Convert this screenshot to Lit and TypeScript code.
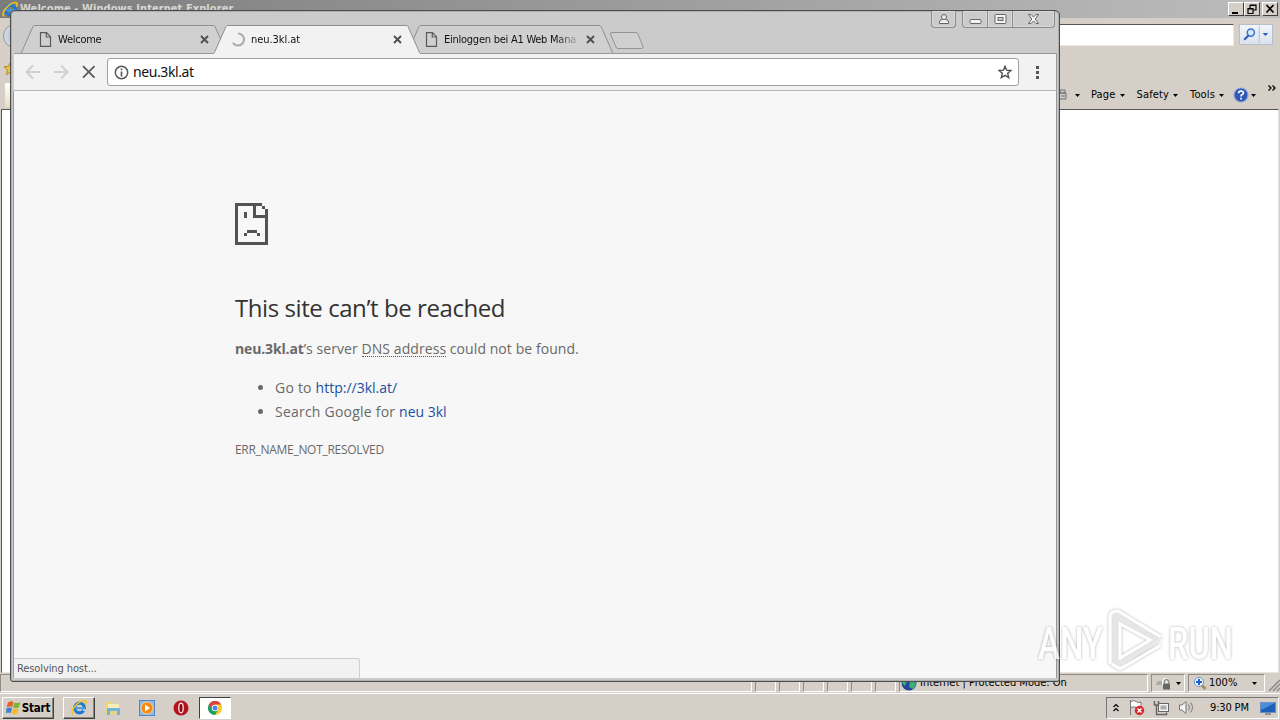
import {LitElement, css, html, svg} from 'lit';
import {customElement, property} from 'lit/decorators.js';
import {classMap} from 'lit/directives/class-map.js';

interface Tab {
  title: string;
  active: boolean;
  loading: boolean;
}

const ieLogo = svg`
  <circle cx="8.5" cy="9" r="4.8" fill="none" stroke="#1f78d0" stroke-width="3.2" />
  <path d="M4 9.200h10" stroke="#3f9be6" stroke-width="2" />
  <path d="M12 10.300l4 .2v1.500h-4z" fill="#d5d0c8" />
  <path d="M2 15.500C-1.500 12 6 2.500 13.500 1.500c2.200 0 1.800 2.500.8 4" fill="none" stroke="#f2c21c" stroke-width="1.700" />
`;

const pageIcon = svg`
  <path d="M1.500.7h6l4 4v9.600h-10zM7.300.9v4.100h4" fill="none" stroke="#5a5a5a" stroke-width="1.200" />
`;

@customElement('chrome-tab')
export class ChromeTab extends LitElement {
  static styles = css`
    :host {
      display: block;
      position: relative;
      width: 206px;
      height: 30px;
      flex: none;
      margin-right: -13px;
    }
    .shape {
      position: absolute;
      inset: 0;
    }
    .content {
      position: relative;
      display: flex;
      align-items: center;
      height: 30px;
      padding: 1px 18px 0;
      box-sizing: border-box;
      width: 206px;
    }
    .icon {
      flex: none;
      width: 13px;
      margin-right: 6px;
    }
    .title {
      width: 134px;
      overflow: hidden;
      white-space: nowrap;
      font-size: 11px;
      line-height: 16px;
      letter-spacing: -0.25px;
      color: #111;
      -webkit-mask-image: linear-gradient(90deg, #000 112px, transparent 138px);
    }
    .title.loading {
      letter-spacing: -0.05px;
    }
    .close {
      margin-left: 8px;
      flex: none;
    }
  `;

  @property({type: Object})
  tab: Tab = {title: '', active: false, loading: false};

  render() {
    const {title, active, loading} = this.tab;
    return html`
      <svg class="shape" width="206" height="30" viewBox="0 0 206 30">
        <path d="M0 29.500L12 2.500Q12.500 1.500 14 1.500H192Q193.500 1.500 194 2.500L206 29.500" fill="${active ? '#f2f2f2' : '#d0d0d0'}" stroke="#8e8e8e" />
        ${active ? svg`<path d="M0 29.500H206" stroke="#f2f2f2" />` : svg`<path d="M0 29.500H206" stroke="#989898" />`}
      </svg>
      <div class="content">
        <svg class="icon" width="13" height="15" viewBox="0 0 13 15">
          ${loading
            ? svg`<path d="M6 1.500a6 6 0 0 1 0 12a6 6 0 0 1-5-2.800" fill="none" stroke="#aaa" stroke-width="2" />`
            : pageIcon}
        </svg>
        <span class=${classMap({title: true, loading})}>${title}</span>
        <svg class="close" width="9" height="9" viewBox="0 0 9 9">
          <path d="M1 1l7 7M8 1l-7 7" stroke="#505050" stroke-width="1.900" />
        </svg>
      </div>
    `;
  }
}

@customElement('chrome-window')
export class ChromeWindow extends LitElement {
  static styles = css`
    :host {
      display: flex;
      flex-direction: column;
      box-sizing: border-box;
      border: 1px solid #4c4c4c;
      border-radius: 5px 5px 3px 3px;
      background: #cbcbcb;
      padding: 0 2px 3px 3px;
      overflow: hidden;
      font-family: Tahoma, 'DejaVu Sans Condensed', 'DejaVu Sans', sans-serif;
      box-shadow: inset 0 0 0 1px #b0b0b0;
    }
    .frame {
      display: flex;
      justify-content: flex-end;
      height: 13px;
      padding-right: 2px;
    }
    .control {
      display: flex;
      align-items: center;
      justify-content: center;
      height: 17px;
      box-sizing: border-box;
      border: 1px solid #8a8a8a;
      border-top: 0;
      border-left-width: 0;
      flex: none;
      box-shadow: inset 0 0 0 1px #d9d9d9;
    }
    .control.user {
      width: 25px;
      border-left-width: 1px;
      border-radius: 0 0 4px 4px;
      margin-right: 6px;
    }
    .control.min {
      width: 26px;
      border-left-width: 1px;
      border-radius: 0 0 0 4px;
    }
    .control.max {
      width: 25px;
    }
    .control.close {
      width: 42px;
      border-radius: 0 0 4px 0;
    }
    .tabs {
      display: flex;
      height: 30px;
      padding-left: 7px;
    }
    chrome-tab.active {
      z-index: 1;
    }
    .new-tab {
      margin: 8px 0 0 9px;
    }
    .toolbar {
      display: flex;
      align-items: center;
      height: 38px;
      box-sizing: border-box;
      background: #f2f2f2;
      border-top: 1px solid #989898;
      border-bottom: 1px solid #b6b6b6;
      margin-top: -1px;
      padding: 0 12px 0 11px;
      border-right: 1px solid #999;
    }
    .nav {
      width: 28px;
      flex: none;
    }
    .nav.stop {
      width: 26px;
    }
    .omnibox {
      display: flex;
      align-items: center;
      flex: none;
      width: 912px;
      height: 28px;
      box-sizing: border-box;
      border: 1px solid #a0a0a0;
      border-radius: 3px;
      background: #fff;
      padding: 0 6px;
    }
    .url {
      flex: 1;
      font: 14px/20px 'Noto Sans', 'Open Sans', sans-serif;
      letter-spacing: -0.4px;
      margin-left: 4px;
      color: #111;
    }
    .menu {
      flex: none;
      margin-left: 16px;
    }
    .page {
      flex: 1;
      display: flex;
      flex-direction: column;
      align-items: flex-start;
      justify-content: space-between;
      background: #f7f7f7;
      border: solid #999;
      border-width: 0 1px;
      margin-left: -1px;
    }
    .error {
      padding: 112px 0 0 221px;
      font: 15px/24px 'Open Sans', 'Noto Sans', sans-serif;
      color: #696969;
      white-space: nowrap;
    }
    .sad {
      display: block;
    }
    h1 {
      margin: 47px 0 0;
      font-size: 24px;
      font-weight: 400;
      line-height: 32px;
      color: #333;
      letter-spacing: -0.43px;
    }
    p {
      margin: 13px 0 0;
      font-size: 14px;
      letter-spacing: 0.07px;
    }
    b {
      letter-spacing: -0.15px;
    }
    .dns {
      border-bottom: 1px dotted #555;
      display: inline-block;
      line-height: 15px;
    }
    ul {
      margin: 15px 0 0;
      padding-left: 40px;
      font-size: 14px;
      letter-spacing: 0.22px;
    }
    a {
      color: #1a4fa3;
      letter-spacing: 0;
    }
    .code {
      margin-top: 14px;
      font-size: 12px;
      letter-spacing: -0.3px;
    }
    .status {
      width: 346px;
      height: 20px;
      box-sizing: border-box;
      border: 1px solid #cfcfcf;
      border-width: 1px 1px 0 0;
      border-radius: 0 3px 0 0;
      background: #f2f2f2;
      padding-left: 3px;
      font-size: 11px;
      letter-spacing: -0.1px;
      line-height: 19px;
      color: #555;
    }
  `;

  tabs: Array<Tab> = [
    {title: 'Welcome', active: false, loading: false},
    {title: 'neu.3kl.at', active: true, loading: true},
    {title: 'Einloggen bei A1 Web Mana', active: false, loading: false}
  ];

  render() {
    return html`
      <div class="frame">
        <div class="control user">
          <svg width="12" height="12" viewBox="0 0 12 12" fill="#eee" stroke="#666"><path d="M1.500 10.500V9Q1.500 6.500 4.500 6.500H7.500Q10.500 6.500 10.500 9V10.500z" /><circle cx="6" cy="4" r="2.500" /></svg>
        </div>
        <div class="control min">
          <svg width="13" height="12" viewBox="0 0 13 12"><rect x="1" y="6.500" width="11" height="4" rx="1" fill="#f4f4f4" stroke="#666" /></svg>
        </div>
        <div class="control max">
          <svg width="13" height="12" viewBox="0 0 13 12" fill="#f4f4f4" stroke="#666"><rect x="1" y="1.500" width="11" height="9" rx="1" /><rect x="4" y="4.500" width="5" height="3" fill="#ccc" /></svg>
        </div>
        <div class="control close">
          <svg width="13" height="12" viewBox="0 0 13 12"><path d="M1.500 1.500H4L6.500 4L9 1.500H11.500L8.200 6L11.500 10.500H9L6.500 8L4 10.500H1.500L4.800 6z" fill="#f4f4f4" stroke="#666" /></svg>
        </div>
      </div>
      <div class="tabs">
        ${this.tabs.map(tab => html`<chrome-tab class=${classMap({active: tab.active})} .tab=${tab}></chrome-tab>`)}
        <svg class="new-tab" width="36" height="18" viewBox="0 0 36 18">
          <path d="M4 .5H27Q28.500.5 29 2L34 14.500Q34.500 16.500 32.500 16.500H9Q7.500 16.500 7 15L1.500 2Q1 .5 3 .5z" fill="#d0d0d0" stroke="#939393" />
        </svg>
      </div>
      <div class="toolbar">
        <svg class="nav" width="28" height="16" viewBox="0 0 28 16"><path d="M15 8H1.500M8 1.500L1.500 8L8 14.500" fill="none" stroke="#d0d0d0" stroke-width="2" /></svg>
        <svg class="nav" width="28" height="16" viewBox="0 0 28 16"><path d="M1 8H14.500M8 1.500L14.500 8L8 14.500" fill="none" stroke="#d0d0d0" stroke-width="2" /></svg>
        <svg class="nav stop" width="26" height="16" viewBox="0 0 26 16"><path d="M2 2.200L13.500 13.700M13.500 2.200L2 13.700" stroke="#5a5a5a" stroke-width="1.800" /></svg>
        <div class="omnibox">
          <svg width="15" height="15" viewBox="0 0 15 15"><circle cx="7.500" cy="7.500" r="6.200" fill="none" stroke="#5a5a5a" stroke-width="1.500" /><path d="M7.500 3.500v1.700M7.500 6.500v5" stroke="#5a5a5a" stroke-width="1.700" /></svg>
          <span class="url">neu.3kl.at</span>
          <svg width="14" height="14" viewBox="0 0 14 14"><path d="M7 1.300L8.600 5.200L13 5.500L9.700 8.300L10.700 12.600L7 10.300L3.300 12.600L4.300 8.300L1 5.500L5.400 5.200z" fill="none" stroke="#505050" stroke-width="1.400" /></svg>
        </div>
        <svg class="menu" width="5" height="14" viewBox="0 0 5 14" fill="#555"><rect x="1" y="1" width="3" height="3" /><rect x="1" y="6" width="3" height="3" /><rect x="1" y="11" width="3" height="3" /></svg>
      </div>
      <div class="page">
        <div class="error">
          <svg class="sad" width="33" height="42" viewBox="0 0 33 42" fill="#535353" shape-rendering="crispEdges">
            <path d="M0 0H27V3H21V12H30V6H33V42H0zM3 3V39H30V15H18V3z" fill-rule="evenodd" />
            <rect x="27" y="3" width="3" height="3" />
            <rect x="9" y="9" width="3" height="6" />
            <rect x="12" y="27" width="10" height="3" />
            <rect x="9" y="30" width="3" height="3" />
            <rect x="22" y="30" width="3" height="3" />
          </svg>
          <h1>This site can’t be reached</h1>
          <p><b>neu.3kl.at</b>’s server <span class="dns">DNS address</span> could not be found.</p>
          <ul>
            <li>Go to <a>http://3kl.at/</a></li>
            <li>Search Google for <a>neu 3kl</a></li>
          </ul>
          <div class="code">ERR_NAME_NOT_RESOLVED</div>
        </div>
        <div class="status">Resolving host...</div>
      </div>
    `;
  }
}

@customElement('ie-window')
export class IeWindow extends LitElement {
  static styles = css`
    :host {
      display: flex;
      flex-direction: column;
      background: #d5cfc7;
      color: #000;
      font: 11px/14px Tahoma, 'DejaVu Sans Condensed', 'DejaVu Sans', sans-serif;
    }
    .title {
      display: flex;
      align-items: center;
      height: 18px;
      flex: none;
      background: linear-gradient(90deg, #7c7c7c, #bcbcbc);
      padding: 0 2px;
      color: #d9d5cf;
      font: bold 11px/20px 'DejaVu Sans Condensed', 'DejaVu Sans', sans-serif;
      letter-spacing: 0.07px;
    }
    .title span {
      flex: 1;
      margin-left: 1px;
    }
    .box {
      width: 16px;
      height: 14px;
      box-sizing: border-box;
      background: #d5cfc7;
      border: 1px solid;
      border-color: #fff #404040 #404040 #fff;
      display: block;
    }
    .box.last {
      margin-left: 2px;
    }
    .address {
      display: flex;
      height: 36px;
      padding: 6px 7px 0 0;
      box-sizing: border-box;
      flex: none;
    }
    .back {
      width: 24px;
      height: 24px;
      border-radius: 50%;
      margin: 0 0 0 3px;
      border: 1px solid #8a96a6;
      background: radial-gradient(#a8b4c4, #e9edf2);
      box-sizing: border-box;
      flex: none;
    }
    .field {
      flex: 1;
      height: 22px;
      box-sizing: border-box;
      background: #fff;
      border: 1px solid #ece9e2;
      border-top-color: #555;
      margin-right: 5px;
    }
    .search {
      display: flex;
      width: 34px;
      height: 21px;
      box-sizing: border-box;
      border: 1px solid #b4bfce;
      background: linear-gradient(#f2f5f9, #dbe2ec);
    }
    .favorites {
      height: 27px;
      padding: 8px 0 0 4px;
      box-sizing: border-box;
      flex: none;
    }
    .commands {
      display: flex;
      justify-content: flex-end;
      align-items: center;
      flex: none;
      height: 28px;
      padding: 0 4px 0 5px;
    }
    .left-tab {
      width: 10px;
      height: 24px;
      background: linear-gradient(#fff, #e5dfc0);
      margin-right: auto;
    }
    .item {
      display: flex;
      align-items: center;
      gap: 4px;
      margin-right: 12px;
      letter-spacing: 0.15px;
    }
    .item.printer {
      margin-right: 11px;
      gap: 8px;
    }
    .item.help {
      margin: 0 12px 0 -3px;
      gap: 2px;
    }
    .more {
      align-self: flex-start;
    }
    .view {
      flex: 1;
      background: #fff;
      border: 1px solid #555;
      border-right-color: #e8e4de;
      border-bottom-color: #e8e4de;
      margin: 0 1px 0 1px;
    }
    .status {
      display: flex;
      height: 20px;
      flex: none;
      padding-top: 1px;
      box-sizing: border-box;
      gap: 3px;
    }
    .cell {
      width: 19px;
      border: 1px solid;
      border-color: #908c86 #fff #fff #908c86;
      display: flex;
      align-items: center;
      height: 16px;
      box-sizing: content-box;
      flex: none;
    }
    .cell.text {
      flex: 1;
    }
    .cell.zone {
      width: 246px;
      padding-left: 1px;
    }
    .cell.zone span {
      margin-left: 3px;
    }
    .cell.lock {
      width: 29px;
      gap: 4px;
      padding-left: 3px;
    }
    .cell.zoom {
      width: 64px;
      padding: 0 7px 0 4px;
    }
    .zoom span {
      flex: 1;
      margin-left: 2px;
    }
  `;

  arrow() {
    return html`<svg width="5" height="3" viewBox="0 0 5 3"><path d="M0 0h5L2.500 3z" /></svg>`;
  }

  render() {
    return html`
      <div class="title">
        <svg width="17" height="17" viewBox="0 0 17 17">${ieLogo}</svg>
        <span>Welcome - Windows Internet Explorer</span>
        <svg class="box" viewBox="0 0 14 12"><path d="M3 9h6v2h-6z" /></svg>
        <svg class="box" viewBox="0 0 14 12"><path d="M5 2h6v5h-3M5 2.500h6M3 5.500h5v5h-5zM3 6h5M5 5v-3" fill="none" stroke="#000" stroke-width="1.200" /></svg>
        <svg class="box last" viewBox="0 0 14 12"><path d="M3.500 2l7 7.500M10.500 2l-7 7.500" stroke="#000" stroke-width="1.700" /></svg>
      </div>
      <div class="address">
        <div class="back"></div>
        <div class="field"></div>
        <div class="search">
          <svg width="34" height="19" viewBox="0 0 34 19">
            <circle cx="11.500" cy="7.500" r="3.800" fill="#d6e7fb" stroke="#3a72cf" stroke-width="1.600" /><path d="M9 10.500l-4.500 4.500" stroke="#2b5bb8" stroke-width="2.200" />
            <path d="M20.500 0v19" stroke="#b4bfce" /><path d="M24 8h6l-3 3z" fill="#2562c4" />
          </svg>
        </div>
      </div>
      <div class="favorites"><svg width="13" height="13" viewBox="0 0 13 13"><path d="M6.500 0l2 4.500 4.500.3-3.500 3 1 4.700-4-2.500-4 2.500 1-4.700-3.500-3L4.500 4.500z" fill="#f0c437" stroke="#b8861b" /></svg></div>
      <div class="commands">
        <div class="left-tab"></div>
        <div class="item printer"><svg width="10" height="12" viewBox="0 0 10 12"><path d="M1 4h8v6h-8zM3 1h5v3h-5zM4 7h4" fill="#ccc" stroke="#707070" /></svg>${this.arrow()}</div>
        <div class="item">Page ${this.arrow()}</div>
        <div class="item">Safety ${this.arrow()}</div>
        <div class="item">Tools ${this.arrow()}</div>
        <div class="item help">
          <svg width="16" height="16" viewBox="0 0 16 16"><circle cx="8" cy="8" r="7" fill="#2f57b8" stroke="#8ba3d8" stroke-width="1.200" /><path d="M5.500 6.300Q5.700 4 8 4Q10.500 4.100 10.400 6Q10.300 7.200 8.900 7.800Q8 8.300 8 9.500M8 10.800v1.700" fill="none" stroke="#fff" stroke-width="1.700" /></svg>
          ${this.arrow()}
        </div>
        <svg class="more" width="8" height="14" viewBox="0 0 8 14"><path d="M.5 4.500l2.500 2.500-2.500 2.500M4.500 4.500l2.500 2.500-2.500 2.500" fill="none" stroke="#000" stroke-width="1.300" /></svg>
      </div>
      <div class="view"></div>
      <div class="status">
        <div class="cell text"></div>
        ${[1, 2, 3, 4, 5, 6].map(() => html`<div class="cell"></div>`)}
        <div class="cell zone">
          <svg width="16" height="16" viewBox="0 0 16 16"><circle cx="8" cy="8" r="7.500" fill="#27459b" /><path d="M2 4q3-3 6-2l1 3-4 3-1 3-3-3zM9 7l5-2 1 5-3 4-4-2z" fill="#3bb073" /></svg>
          <span>Internet | Protected Mode: On</span>
        </div>
        <div class="cell lock">
          <svg width="17" height="16" viewBox="0 0 17 16"><path d="M1 9q2-4 5-3l3-2v5l-3 1H1z" fill="#aaa" /><path d="M7 5q3-4 6-1l1 4-3 3-4-1z" fill="#f1f1f1" /><path d="M9.500 8.500V6q2-3 4 0V8.500" fill="none" stroke="#888" stroke-width="1.400" /><rect x="8" y="8.500" width="7" height="6" fill="#666" /></svg>
          ${this.arrow()}
        </div>
        <div class="cell zoom">
          <svg width="14" height="15" viewBox="0 0 14 15"><path d="M8.500 9l4 4" stroke="#a58c50" stroke-width="2.500" /><circle cx="6" cy="6" r="4.600" fill="#e8f2fd" stroke="#7399c9" /><path d="M6 3v6M3 6h6" stroke="#1c62ce" stroke-width="2" /></svg>
          <span>100%</span>${this.arrow()}
        </div>
        <svg width="12" height="18" viewBox="0 0 12 18"><path d="M1 17L12 6M5 17L12 10M9 17L12 14" stroke="#888" stroke-width="1.400" /></svg>
      </div>
    `;
  }
}

@customElement('task-bar')
export class TaskBar extends LitElement {
  static styles = css`
    :host {
      display: flex;
      align-items: center;
      box-sizing: border-box;
      background: #d5cfc7;
      border-top: 1px solid #fff;
      padding: 1px 1px 0 2px;
      font: 11px/14px Tahoma, 'DejaVu Sans Condensed', 'DejaVu Sans', sans-serif;
    }
    .button {
      display: flex;
      align-items: center;
      justify-content: center;
      width: 32px;
      height: 22px;
      box-sizing: border-box;
      border: 1px solid;
      border-color: #fff #404040 #404040 #fff;
      box-shadow: inset -1px -1px #8a8680;
    }
    .start {
      width: 52px;
      font-weight: bold;
      font-size: 11.5px;
      letter-spacing: -0.2px;
      gap: 1px;
      margin-right: 9px;
    }
    .pressed {
      background: #fff;
      border-color: #404040 #fff #fff #404040;
      box-shadow: none;
      margin-left: 2px;
    }
    .launch {
      display: block;
      width: 16px;
      height: 16px;
      margin-left: 10px;
      margin-right: 8px;
    }
    .tray {
      display: flex;
      align-items: center;
      width: 173px;
      height: 22px;
      box-sizing: border-box;
      border: 1px solid;
      border-color: #777 #fff #fff #777;
      margin-left: auto;
      padding-left: 6px;
    }
    .tray svg {
      flex: none;
    }
    .signal {
      margin-left: 8px;
    }
    .signal.flag {
      margin-left: 9px;
    }
    .time {
      margin: 0 0 0 15px;
      width: 50px;
      white-space: nowrap;
      letter-spacing: -0.15px;
    }
  `;

  render() {
    return html`
      <div class="button start">
        <svg width="15" height="15" viewBox="0 0 15 15">
          <path d="M2 2.500q3-2 5.500-.5L6.300 7q-3-1.300-5.600.3z" fill="#e8602c" /><path d="M8.300 2.500q3 1.200 6-.3L12.800 7.500q-3 1.300-5.700 0z" fill="#77b83a" />
          <path d="M.5 8.200q3-1.400 5.500-.2L4.800 13q-3-1.200-4.800.2z" fill="#3b7fd4" /><path d="M6.800 8.500q3 1.200 5.800 0l-1.200 5q-3 1.200-5.900 0z" fill="#f2bb2b" />
        </svg>
        <span>Start</span>
      </div>
      <div class="button"><svg width="17" height="17" viewBox="0 0 17 17">${ieLogo}</svg></div>
      <svg class="launch" viewBox="0 0 16 16"><path d="M1 2h6l1 2h6v10h-13z" fill="#edd57b" /><path d="M3 4h11v5h-11z" fill="#f8edb8" /><path d="M2 8h13v7h-3v-4h-7v4h-3z" fill="#6fb4dc" /></svg>
      <svg class="launch" viewBox="0 0 16 16"><rect x=".5" y=".5" width="15" height="15" fill="#8fbce8" stroke="#4d87c8" /><circle cx="8" cy="8" r="6" fill="#f58a13" stroke="#fbd08d" /><path d="M6 4.500l5 3.500-5 3.500z" fill="#fff" /></svg>
      <svg class="launch" viewBox="0 0 16 16"><circle cx="8" cy="8" r="7.500" fill="#b5121b" /><ellipse cx="8" cy="8" rx="2.200" ry="4.800" fill="#8c0a10" stroke="#fff" stroke-width="1.200" /></svg>
      <div class="button pressed">
        <svg width="14" height="14" viewBox="0 0 14 14"><path d="M7 7L.9 3.500A7 7 0 0 1 13.100 3.500z" fill="#dc4437" /><path d="M7 7V0L13 3.500A7 7 0 0 1 7 14z" fill="#fbc926" /><path d="M7 7l-6.100-3.500A7 7 0 0 0 7 14l3-5.200z" fill="#1da05d" /><path d="M.9 3.500A7 7 0 0 1 13.100 3.500H7L4 8.500z" fill="#dc4437" /><circle cx="7" cy="7" r="3.300" fill="#fff" /><circle cx="7" cy="7" r="2.500" fill="#4687f4" /></svg>
      </div>
      <div class="tray">
        <svg width="6" height="10" viewBox="0 0 6 10"><path d="M.5 4l2.500-2.500L5.500 4M.5 8l2.500-2.500L5.500 8" fill="none" stroke="#000" stroke-width="1.200" /></svg>
        <svg class="signal flag" width="17" height="17" viewBox="0 0 17 17"><path d="M2.500 1v15M3 2.500q3-2 5 0t5 .5v6q-3 1-5-.5t-5 0" fill="#fff" stroke="#777" /><circle cx="11.500" cy="11.500" r="4.700" fill="#d9252b" /><path d="M9.500 9.500l4 4M13.500 9.500l-4 4" stroke="#fff" stroke-width="1.500" /></svg>
        <svg class="signal" width="17" height="17" viewBox="0 0 17 17" fill="#f4f4f4" stroke="#666"><rect x="5.500" y="4.500" width="10" height="8" /><rect x="7.500" y="6.500" width="6" height="4" fill="#aaa" stroke="none" /><path d="M1.500 2v4h4v-4M3.500 6v9.500h10v-2" fill="none" stroke-width="1.500" /></svg>
        <svg class="signal" width="17" height="17" viewBox="0 0 17 17" fill="none" stroke="#777"><path d="M1.500 6v5h2.500l4 3.500v-12l-4 3.500z" fill="#f4f4f4" /><path d="M10.500 5.500q2 3 0 6M12.500 3.500q4 5 0 10" /></svg>
        <span class="time">9:30 PM</span>
        <svg width="16" height="14" viewBox="0 0 16 14"><rect x=".5" y="1.500" width="15" height="10" fill="#1f5fb8" stroke="#6a8fc0" /><path d="M1 2h14l-14 7z" fill="#4a8fdb" /><path d="M5 13h6" stroke="#555" /></svg>
      </div>
    `;
  }
}

@customElement('app-root')
export class AppRoot extends LitElement {
  static styles = css`
    :host {
      display: flex;
      flex-direction: column;
      position: relative;
      width: 1280px;
      height: 720px;
      overflow: hidden;
      background: #d5cfc7;
    }
    ie-window {
      height: 693px;
    }
    task-bar {
      height: 27px;
    }
    chrome-window {
      position: absolute;
      left: 10px;
      top: 10px;
      width: 1050px;
      height: 672px;
    }
    .watermark {
      position: absolute;
      left: 1032px;
      top: 602px;
      overflow: visible;
      filter: drop-shadow(0 0 1.5px rgba(0, 0, 0, 0.4));
      opacity: 0.75;
    }
    .watermark text {
      font: 500 45px Roboto, 'Liberation Sans', sans-serif;
    }
  `;

  render() {
    return html`
      <ie-window></ie-window>
      <task-bar></task-bar>
      <chrome-window></chrome-window>
      <svg class="watermark" width="208" height="80" viewBox="0 0 208 80" fill="#fff">
        <text x="6" y="57" textLength="65" lengthAdjust="spacingAndGlyphs">ANY</text>
        <path d="M78 64V14L86 8L130 37L86 67zM88 22V54L116 38z" fill="#eee" fill-opacity=".7" fill-rule="evenodd" />
        <path d="M78 62V14Q79 9 86 9L129 35M88 58V22L118 38L88 56M80 62L88 67L129 43" fill="none" stroke="#fff" stroke-width="3" />
        <text x="136" y="57" textLength="65" lengthAdjust="spacingAndGlyphs">RUN</text>
      </svg>
    `;
  }
}
